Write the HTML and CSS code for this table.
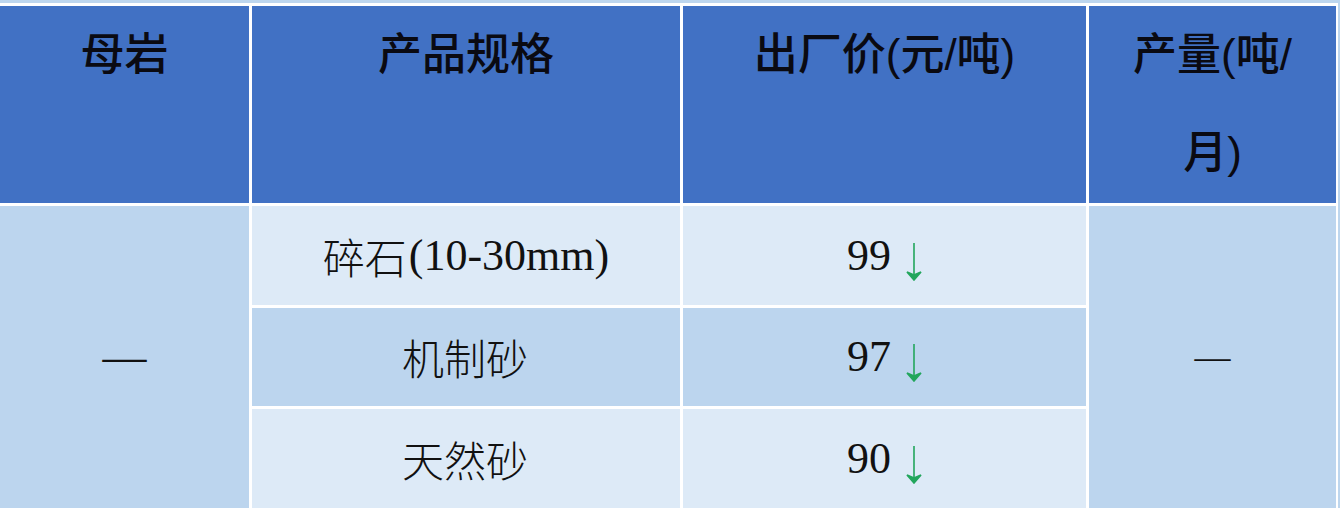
FILE: index.html
```html
<!DOCTYPE html>
<html lang="zh-CN">
<head>
<meta charset="utf-8">
<title>价格表</title>
<link rel="stylesheet" href="styles.css">
</head>
<body>
<div class="page">
  <div class="table">
    <div class="cell head">母岩</div>
    <div class="cell head">产品规格</div>
    <div class="cell head">出厂价(元/吨)</div>
    <div class="cell head">产量(吨/<br>月)</div>

    <div class="cell side side-left"><span class="dash">—</span></div>
    <div class="cell body light"><span class="cjk">碎石</span>(10-30mm)</div>
    <div class="cell body light"><span class="price">99<svg class="arrow" viewBox="0 0 16 38" width="16" height="38"><line x1="8" y1="0" x2="8" y2="34" /><polygon points="1,29 8,37 15,29 8,32" /></svg></span></div>
    <div class="cell side side-right"><span class="dash dash-small">—</span></div>

    <div class="cell body mid"><span class="cjk">机制砂</span></div>
    <div class="cell body mid"><span class="price">97<svg class="arrow" viewBox="0 0 16 38" width="16" height="38"><line x1="8" y1="0" x2="8" y2="34" /><polygon points="1,29 8,37 15,29 8,32" /></svg></span></div>

    <div class="cell body light"><span class="cjk">天然砂</span></div>
    <div class="cell body light"><span class="price">90<svg class="arrow" viewBox="0 0 16 38" width="16" height="38"><line x1="8" y1="0" x2="8" y2="34" /><polygon points="1,29 8,37 15,29 8,32" /></svg></span></div>
  </div>
</div>
</body>
</html>
```
FILE: styles.css
```css
html, body {
  margin: 0;
  padding: 0;
}
body {
  background: #bdd6ee;
  width: 1340px;
  height: 508px;
  overflow: hidden;
}
.page {
  padding-top: 3px;
}
.table {
  width: 1336px;
  background: #ffffff;
  padding: 3px 2px 0 0;
  display: grid;
  grid-template-columns: 249px 428px 403px 247px;
  grid-template-rows: 197px 99px 98px 99px;
  gap: 3px;
}
.cell {
  display: flex;
  justify-content: center;
  align-items: center;
  color: #000;
}
.head {
  background: #4171c4;
  align-items: flex-start;
  text-align: center;
  font-family: "Liberation Sans", "Noto Sans CJK SC", sans-serif;
  font-weight: 500;
  font-size: 44px;
  line-height: 98px;
  color: #0a0a12;
}
.side {
  background: #bcd5ee;
  grid-row: 2 / span 3;
}
.side-left {
  grid-column: 1;
}
.side-right {
  grid-column: 4;
}
.body {
  font-family: "Liberation Serif", "Noto Sans CJK SC", serif;
  font-size: 44px;
  line-height: 1;
  color: #111;
}
.light {
  background: #ddeaf7;
}
.mid {
  background: #bcd5ee;
}
.cjk {
  font-family: "Noto Sans CJK SC", sans-serif;
  font-weight: 300;
  font-size: 42px;
  margin-right: 2px;
}
.price {
  display: inline-flex;
  align-items: center;
}
.arrow {
  margin-left: 15px;
  margin-top: 12px;
  fill: #22a65c;
  stroke: #22a65c;
  stroke-width: 1.6;
}
.dash {
  font-family: "Liberation Serif", serif;
  font-size: 44px;
  line-height: 1;
  color: #111;
}
.dash-small {
  font-size: 36px;
}
```
